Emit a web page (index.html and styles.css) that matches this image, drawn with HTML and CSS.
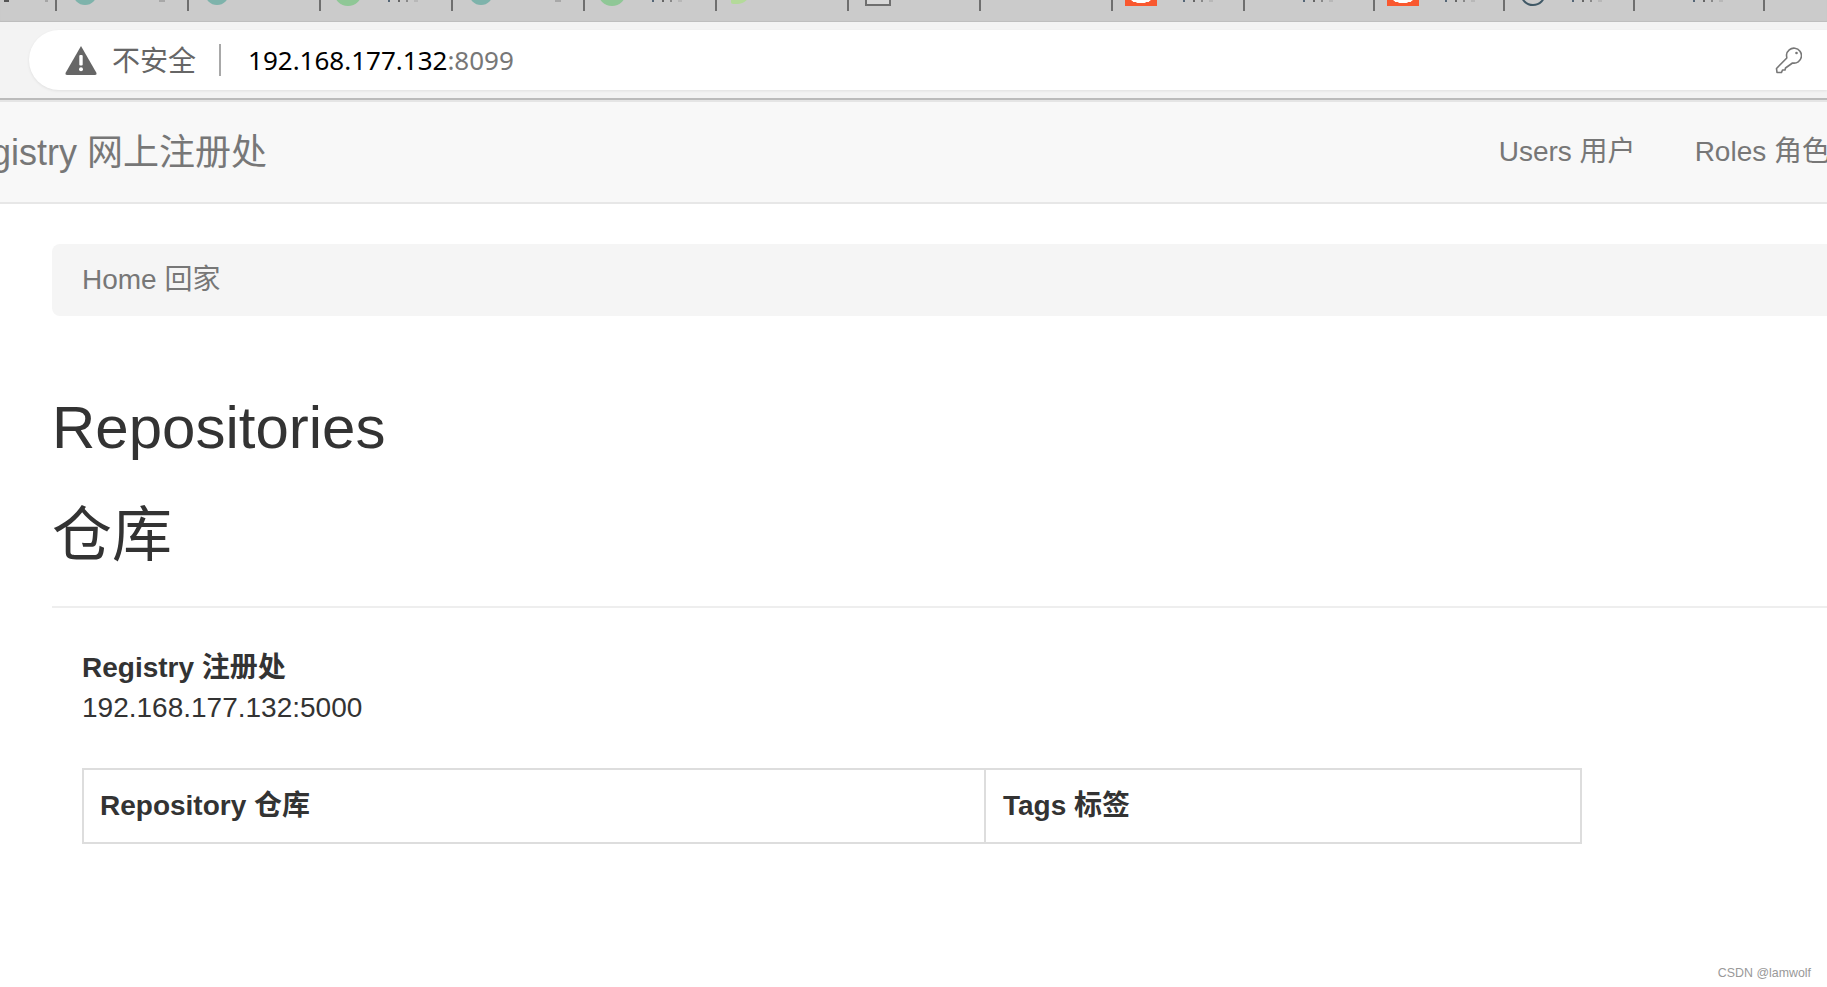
FILE: index.html
```html
<!DOCTYPE html>
<html lang="zh-CN">
<head>
  <meta charset="UTF-8">
  <meta name="viewport" content="width=device-width, initial-scale=1.0">
  <title>Registry 网上注册处</title>
  <link rel="stylesheet" href="styles.css">
</head>
<body>
  <!-- browser chrome, tabs are cut off by the top of the shot -->
  <div class="tab-strip">
    <div class="tab tab-first"><i class="mark mark-a"></i><i class="mark mark-b"></i></div>
    <div class="tab"><i class="fav fav-teal"></i><i class="mark mark-end"></i></div>
    <div class="tab"><i class="fav fav-teal"></i></div>
    <div class="tab"><i class="fav fav-green"></i><i class="mark mark-text"></i></div>
    <div class="tab"><i class="fav fav-teal"></i><i class="mark mark-end"></i></div>
    <div class="tab"><i class="fav fav-green"></i><i class="mark mark-text"></i></div>
    <div class="tab"><i class="fav fav-leaf"></i></div>
    <div class="tab"><i class="fav fav-page"></i></div>
    <div class="tab"></div>
    <div class="tab"><i class="fav fav-red"></i><i class="mark mark-text"></i></div>
    <div class="tab tab-short"><i class="mark mark-text mark-far"></i></div>
    <div class="tab tab-short"><i class="fav fav-red"></i><i class="mark mark-text"></i></div>
    <div class="tab tab-short"><i class="fav fav-ring"></i><i class="mark mark-text"></i></div>
    <div class="tab tab-short"><i class="mark mark-text mark-far"></i></div>
  </div>

  <div class="toolbar">
    <div class="address-bar">
      <svg class="warn-icon" viewBox="0 0 32 30" width="32" height="30">
        <path d="M16 1 L31.5 28 Q32 30 30 30 L2 30 Q0 30 .5 28 Z" fill="#666"/>
        <rect x="14.3" y="10" width="3.4" height="10.5" rx="1" fill="#fff"/>
        <circle cx="16" cy="24.2" r="2" fill="#fff"/>
      </svg>
      <span class="not-secure">不安全</span>
      <span class="divider"></span>
      <span class="url">192.168.177.132<span class="url-port">:8099</span></span>
      <svg class="key-icon" viewBox="0 0 27 27" width="27" height="27">
        <path d="M11.5 8 A7.5 7.5 0 1 1 17.5 16 L10.5 21 L10 23 L7.5 23 L6.5 25.5 L2 25.5 L1.5 21.5 L11.8 11 Z" fill="none" stroke="#777" stroke-width="1.6" stroke-linejoin="round"/>
        <circle cx="21.5" cy="6" r="1.3" fill="#777"/>
      </svg>
    </div>
  </div>

  <nav class="navbar">
    <a class="brand">Registry 网上注册处</a>
    <ul class="nav-links">
      <li><a>Users 用户</a></li>
      <li><a>Roles 角色</a></li>
    </ul>
  </nav>

  <div class="container">
    <div class="breadcrumb">Home 回家</div>

    <div class="page-header">
      <h2>Repositories</h2>
      <h2>仓库</h2>
    </div>

    <div class="content">
      <p class="registry"><strong>Registry 注册处</strong><br>192.168.177.132:5000</p>
      <table class="repo-table">
        <thead>
          <tr>
            <th class="col-repo">Repository 仓库</th>
            <th class="col-tags">Tags 标签</th>
          </tr>
        </thead>
      </table>
    </div>
  </div>

  <div class="watermark">CSDN @lamwolf</div>
</body>
</html>
```

FILE: styles.css
```css
/* General Styles */
body {
  font-family: "Liberation Sans", "Noto Sans CJK SC", sans-serif;
  font-size: 28px;
  line-height: 40px;
  margin: 0;
  color: #333;
  background: #fff;
  height: 987px;
  overflow: hidden;
}

/* Tab strip */
.tab-strip {
  display: flex;
  height: 22px;
  background: #cbcbcb;
  box-shadow: inset 0 -1px 1px #bdbdbd;
}

.tab {
  position: relative;
  flex: none;
  box-sizing: border-box;
  display: flex;
  width: 132px;
  height: 11px;
  padding-left: 16px;
  border-right: 2px solid #6f6f6f;
  overflow: hidden;
}

.tab-first {
  width: 57px;
  padding-left: 4px;
}

.tab-short {
  width: 130px;
}

.fav {
  flex: none;
  display: block;
  width: 24px;
  height: 24px;
  margin-top: -19px;
  border-radius: 50%;
}

.fav-teal { background: #7eb3ab; }
.fav-green { width: 28px; height: 28px; margin-top: -22px; margin-left: -3px; background: #8fc796; }

.fav-leaf {
  width: 20px;
  height: 14px;
  margin-left: -2px;
  margin-top: -10px;
  border-radius: 0 0 14px 2px;
  background: #b4da9a;
}

.fav-page {
  box-sizing: border-box;
  width: 26px;
  height: 24px;
  margin-top: -18px;
  border-radius: 0;
  border: 2px solid #6f6f6f;
  background: #d8d8d8;
}

.fav-red {
  width: 32px;
  height: 6px;
  margin-top: 0;
  margin-left: -4px;
  border-radius: 0;
  background: radial-gradient(ellipse 10px 3px at 50% 0, #fff 90%, #f9582f 100%);
}

.fav-ring {
  box-sizing: border-box;
  width: 26px;
  height: 26px;
  margin-top: -20px;
  margin-left: -1px;
  border: 2px solid #3f5866;
  background: transparent;
}

/* scraps of the tab titles that stick out below the crop */
.mark {
  flex: none;
  display: block;
  height: 2px;
}

.mark-a { width: 5px; background: #555; }
.mark-b { width: 3px; margin-left: 36px; background: #a5a5a5; }
.mark-end { width: 6px; margin-left: 62px; background: #a8a8a8; }

.mark-text {
  width: 30px;
  height: 2px;
  margin-left: 26px;
  background: linear-gradient(90deg, #567 0 2px, transparent 2px 10px, #666 10px 12px, transparent 12px 18px, #888 18px 20px, transparent 20px 26px, #b8b8b8 26px);
}

.mark-far { margin-left: 42px; }

/* Address bar */
.toolbar {
  height: 76px;
  box-sizing: border-box;
  padding: 8px 0 8px 29px;
  background: #f3f3f3;
  border-bottom: 0;
}

.address-bar {
  display: flex;
  align-items: center;
  height: 60px;
  padding-left: 36px;
  background: #fff;
  border-radius: 30px 0 0 30px;
  box-shadow: 0 1px 3px rgba(0, 0, 0, 0.08);
  font-family: "Noto Sans", "Noto Sans CJK SC", sans-serif;
}

.warn-icon {
  flex: none;
}

.not-secure {
  margin-left: 15px;
  color: #666;
}

.divider {
  width: 2px;
  height: 32px;
  margin: 0 27px 0 23px;
  background: #a8a8a8;
}

.url {
  font-size: 26px;
  color: #000;
}

.url-port {
  color: #777;
}

.key-icon {
  margin-left: auto;
  margin-right: 25px;
}

/* Navbar */
.navbar {
  display: flex;
  align-items: center;
  height: 100px;
  border-top: 2px solid #bbb;
  box-shadow: inset 0 2px 0 #e5e5e5;
  padding-top: 2px;
  background: #f8f8f8;
  border-bottom: 2px solid #e7e7e7;
  color: #777;
}

.brand {
  margin: 2px 0 0 -55px;
  font-size: 36px;
}

.nav-links {
  flex: none;
  display: flex;
  gap: 59px;
  list-style: none;
  margin: 0 -3px 0 auto;
  padding: 0;
}

/* Container Styles */
.container {
  margin: 40px -100px 0 52px;
}

.breadcrumb {
  height: 72px;
  box-sizing: border-box;
  padding: 16px 30px;
  background: #f5f5f5;
  border-radius: 8px;
  color: #777;
}

.page-header {
  margin-top: 58px;
  padding-bottom: 16px;
  border-bottom: 2px solid #eee;
}

h2 {
  margin: 0;
  font-size: 60px;
  font-weight: 400;
  line-height: 108px;
}

.content {
  padding: 0 30px;
}

.registry {
  margin: 40px 0;
}

.repo-table {
  width: 1500px;
  table-layout: fixed;
  border-collapse: collapse;
}

.repo-table th {
  padding: 16px;
  border: 2px solid #ddd;
  text-align: left;
}

.col-repo {
  width: 868px;
}

.repo-table .col-tags {
  padding-left: 17px;
}

.watermark {
  position: absolute;
  right: 16px;
  bottom: 6px;
  font-size: 12.4px;
  line-height: 16px;
  color: #999;
}
```
